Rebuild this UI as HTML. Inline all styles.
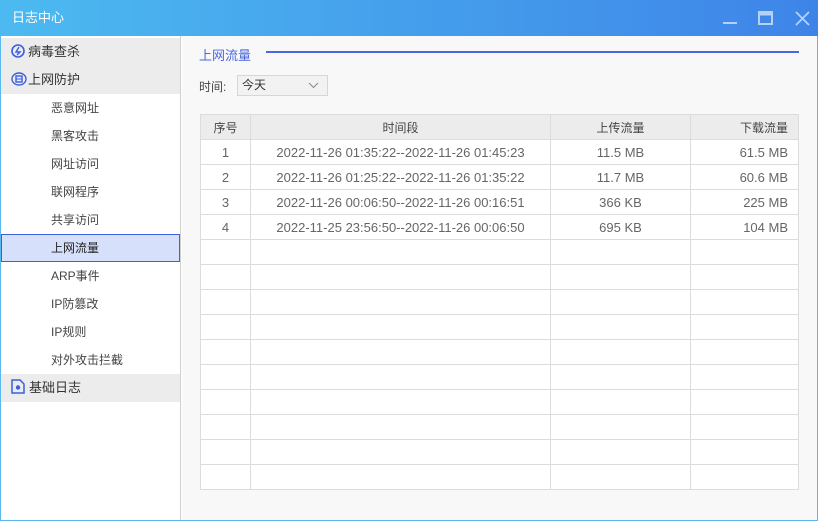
<!DOCTYPE html>
<html><head><meta charset="utf-8"><style>
*{margin:0;padding:0;box-sizing:border-box}
body{width:818px;height:521px;overflow:hidden;font-family:"Liberation Sans","Noto Sans CJK SC",sans-serif;font-size:12px;color:#555;background:#fff;position:relative}
.win{position:absolute;left:0;top:0;width:818px;height:521px;border:1px solid #5ab8ee;border-top:none}
.title{position:absolute;left:0;top:0;width:818px;height:36px;background:linear-gradient(90deg,#4cbaf0,#3e84e8);color:#fff;font-size:13px;line-height:36px;padding-left:12px}
.side{position:absolute;left:1px;top:36px;width:180px;height:484px;background:#fff;border-right:1px solid #d0d0d0}
.cat{height:28px;background:#ececec;line-height:28px;font-size:13px;color:#333;padding-left:10px;position:relative}
.it{height:28px;line-height:28px;padding-left:50px;color:#444;font-size:12px}
.sel{background:#d7e0fb;border:1px solid #3b62dc;line-height:26px;padding-left:49px;color:#222}
.main{position:absolute;left:182px;top:36px;width:635px;height:484px;background:#f8f8f8}
.h{position:absolute;left:17px;top:9px;color:#4a68e0;font-size:13px}
.hl{position:absolute;left:84px;top:15px;width:533px;height:2px;background:#4a68e0}
.t{position:absolute;left:17px;top:42px;color:#444}
.sel2{position:absolute;left:55px;top:39px;width:91px;height:21px;border:1px solid #d6d6d6;background:#f2f2f2;padding-left:4px;line-height:19px;color:#333}
table{position:absolute;left:18px;top:78px;width:599px;border-collapse:collapse;background:#fff}
td,th{border:1px solid #dcdcdc;height:25px;font-weight:normal;color:#666;text-align:center;font-size:13px}
th{background:#ececec;color:#444;font-size:12px}
.r{text-align:right;padding-right:10px}
</style></head><body>
<div class="win"></div>
<div class="title">日志中心
<svg style="position:absolute;left:720px;top:10px" width="90" height="16"><line x1="3" y1="13" x2="17" y2="13" stroke="#b4d2f6" stroke-width="2"/><rect x="39" y="2" width="13" height="12" fill="none" stroke="#b4d2f6" stroke-width="2"/><line x1="39" y1="4" x2="52" y2="4" stroke="#b4d2f6" stroke-width="3"/><path d="M76 2L89 15M89 2L76 15" stroke="#b4d2f6" stroke-width="1.8"/></svg></div>
<div class="side">
<div class="cat" style="margin-top:2px"><svg width="14" height="14" style="vertical-align:-2px;margin-right:3px"><circle cx="7" cy="7" r="6" fill="none" stroke="#3a5ee0" stroke-width="1.6"/><path d="M8 3L5 8H9L6 11" fill="none" stroke="#3a5ee0" stroke-width="1.4"/></svg>病毒查杀</div>
<div class="cat"><svg width="16" height="14" style="vertical-align:-2px;margin-right:1px"><ellipse cx="8" cy="7" rx="7" ry="6" fill="none" stroke="#3a5ee0" stroke-width="1.4"/><rect x="5" y="4" width="6" height="6" fill="none" stroke="#3a5ee0" stroke-width="1.4"/><line x1="5" y1="7" x2="11" y2="7" stroke="#3a5ee0"/></svg>上网防护</div>
<div class="it">恶意网址</div><div class="it">黑客攻击</div><div class="it">网址访问</div><div class="it">联网程序</div><div class="it">共享访问</div>
<div class="it sel">上网流量</div>
<div class="it">ARP事件</div><div class="it">IP防篡改</div><div class="it">IP规则</div><div class="it">对外攻击拦截</div>
<div class="cat"><svg width="14" height="15" style="vertical-align:-2px;margin-right:4px"><path d="M1 1H9L13 5V14H1Z" fill="none" stroke="#3a5ee0" stroke-width="1.5"/><circle cx="7" cy="8.5" r="2.2" fill="#3a5ee0"/></svg>基础日志</div>
</div>
<div class="main">
<div class="h">上网流量</div><div class="hl"></div>
<div class="t">时间:</div>
<div class="sel2">今天<svg style="position:absolute;right:8px;top:6px" width="11" height="7"><path d="M1 1L5.5 5.5L10 1" fill="none" stroke="#888"/></svg></div>
<table>
<tr><th style="width:50px">序号</th><th style="width:300px">时间段</th><th style="width:140px">上传流量</th><th class="r">下载流量</th></tr>
<tr><td>1</td><td>2022-11-26 01:35:22--2022-11-26 01:45:23</td><td>11.5 MB</td><td class="r">61.5 MB</td></tr>
<tr><td>2</td><td>2022-11-26 01:25:22--2022-11-26 01:35:22</td><td>11.7 MB</td><td class="r">60.6 MB</td></tr>
<tr><td>3</td><td>2022-11-26 00:06:50--2022-11-26 00:16:51</td><td>366 KB</td><td class="r">225 MB</td></tr>
<tr><td>4</td><td>2022-11-25 23:56:50--2022-11-26 00:06:50</td><td>695 KB</td><td class="r">104 MB</td></tr>
<tr><td></td><td></td><td></td><td></td></tr><tr><td></td><td></td><td></td><td></td></tr>
<tr><td></td><td></td><td></td><td></td></tr><tr><td></td><td></td><td></td><td></td></tr>
<tr><td></td><td></td><td></td><td></td></tr><tr><td></td><td></td><td></td><td></td></tr>
<tr><td></td><td></td><td></td><td></td></tr><tr><td></td><td></td><td></td><td></td></tr>
<tr><td></td><td></td><td></td><td></td></tr><tr><td></td><td></td><td></td><td></td></tr>
</table>
</div>
</body></html>
